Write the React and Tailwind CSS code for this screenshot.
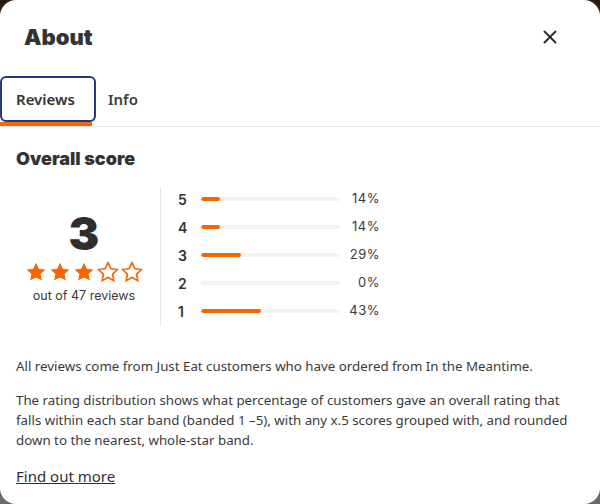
import { X } from "lucide-react";

const ratings = [
  { star: 5, pct: 14 },
  { star: 4, pct: 14 },
  { star: 3, pct: 29 },
  { star: 2, pct: 0 },
  { star: 1, pct: 43 },
];

const Star = ({ filled }) => (
  <svg width="22" height="22" viewBox="0 0 24 24">
    <path
      d="M12 1.8l3.1 6.6 7.2.9-5.3 5 1.4 7.1L12 17.9l-6.4 3.5 1.4-7.1-5.3-5 7.2-.9z"
      fill={filled ? "#f36805" : "#fff"}
      stroke="#f36805"
      strokeWidth={filled ? 0 : 1.8}
      strokeLinejoin="miter"
    />
  </svg>
);

const App = () => {
  return (
    <div className="w-[600px] h-[504px] bg-gradient-to-b from-[#2e1a0c] to-[#6a6a6a]">
      <div className="h-full bg-white rounded-2xl overflow-hidden text-[#2f2f2f]">
        <div className="flex justify-between items-center h-[74px] pl-6 pr-[39px] mb-[2px]">
          <h1 className="text-[22px] font-black text-[#333]" style={{ fontFamily: "Inter, sans-serif" }}>
            About
          </h1>
          <X size={22} strokeWidth={2.2} className="text-[#303030]" />
        </div>

        <div className="flex border-b border-[#e6e6e6] mt-px" style={{ fontFamily: "'Noto Sans', sans-serif" }}>
          <div className="relative w-[92px] h-[50px] flex flex-col">
            <div className="flex-1 flex items-center px-4 text-[15px] font-semibold text-[#333]">Reviews</div>
            <div className="h-1 bg-[#f36805]"></div>
            <div className="absolute left-0 top-0 w-[96px] h-[46px] border-2 border-[#27348b] rounded-md"></div>
          </div>
          <div className="h-[46px] flex items-center px-4 text-[15px] font-semibold text-[#3a4040]">Info</div>
        </div>

        <div className="px-4" style={{ fontFamily: "'Noto Sans', sans-serif" }}>
          <h2 className="mt-5 text-[18px] leading-6 font-black text-[#333]" style={{ fontFamily: "Inter, sans-serif" }}>
            Overall score
          </h2>

          <div className="flex mt-[14px]" style={{ fontFamily: "Inter, sans-serif" }}>
            <div className="w-[136px] flex flex-col items-center justify-center pt-1">
              <div className="text-[46px] leading-[48px] font-black text-[#2e2e2e]">3</div>
              <div className="flex gap-[2px] mt-[4px]">
                {[1, 2, 3, 4, 5].map((i) => (
                  <Star key={i} filled={i <= 3} />
                ))}
              </div>
              <div className="text-[12.5px] text-[#3a3a3a] mt-[4px]">out of 47 reviews</div>
            </div>
            <div className="ml-2 w-px bg-[#e6e6e6] mt-[2px] h-[139px]"></div>
            <div className="pl-[17px]">
              {ratings.map((r) => (
                <div key={r.star} className="flex items-center h-7">
                  <span className="w-[23px] text-[14px] font-semibold text-[#333]">{r.star}</span>
                  <div className="w-[139px] h-1 rounded-full bg-[#f5f1ec] overflow-hidden">
                    <div className="h-full rounded-full bg-[#f36805]" style={{ width: `${r.pct}%` }}></div>
                  </div>
                  <span className="w-[40px] text-right text-[13px] tracking-[0.5px] text-[#3a3a3a]">{r.pct}%</span>
                </div>
              ))}
            </div>
          </div>

          <p className="mt-[30px] text-[13.3px] leading-5 text-[#3a3a3a]">
            All reviews come from Just Eat customers who have ordered from In the Meantime.
          </p>
          <p className="mt-[14px] text-[13.3px] leading-5 text-[#3a3a3a]">
            The rating distribution shows what percentage of customers gave an overall rating that falls within each star band (banded 1 –5), with any x.5 scores grouped with, and rounded down to the nearest, whole-star band.
          </p>
          <a href="#" className="block mt-[15px] text-[15px] leading-[22px] underline text-[#2f2f2f]">
            Find out more
          </a>
        </div>
      </div>
    </div>
  );
};

export default App;
